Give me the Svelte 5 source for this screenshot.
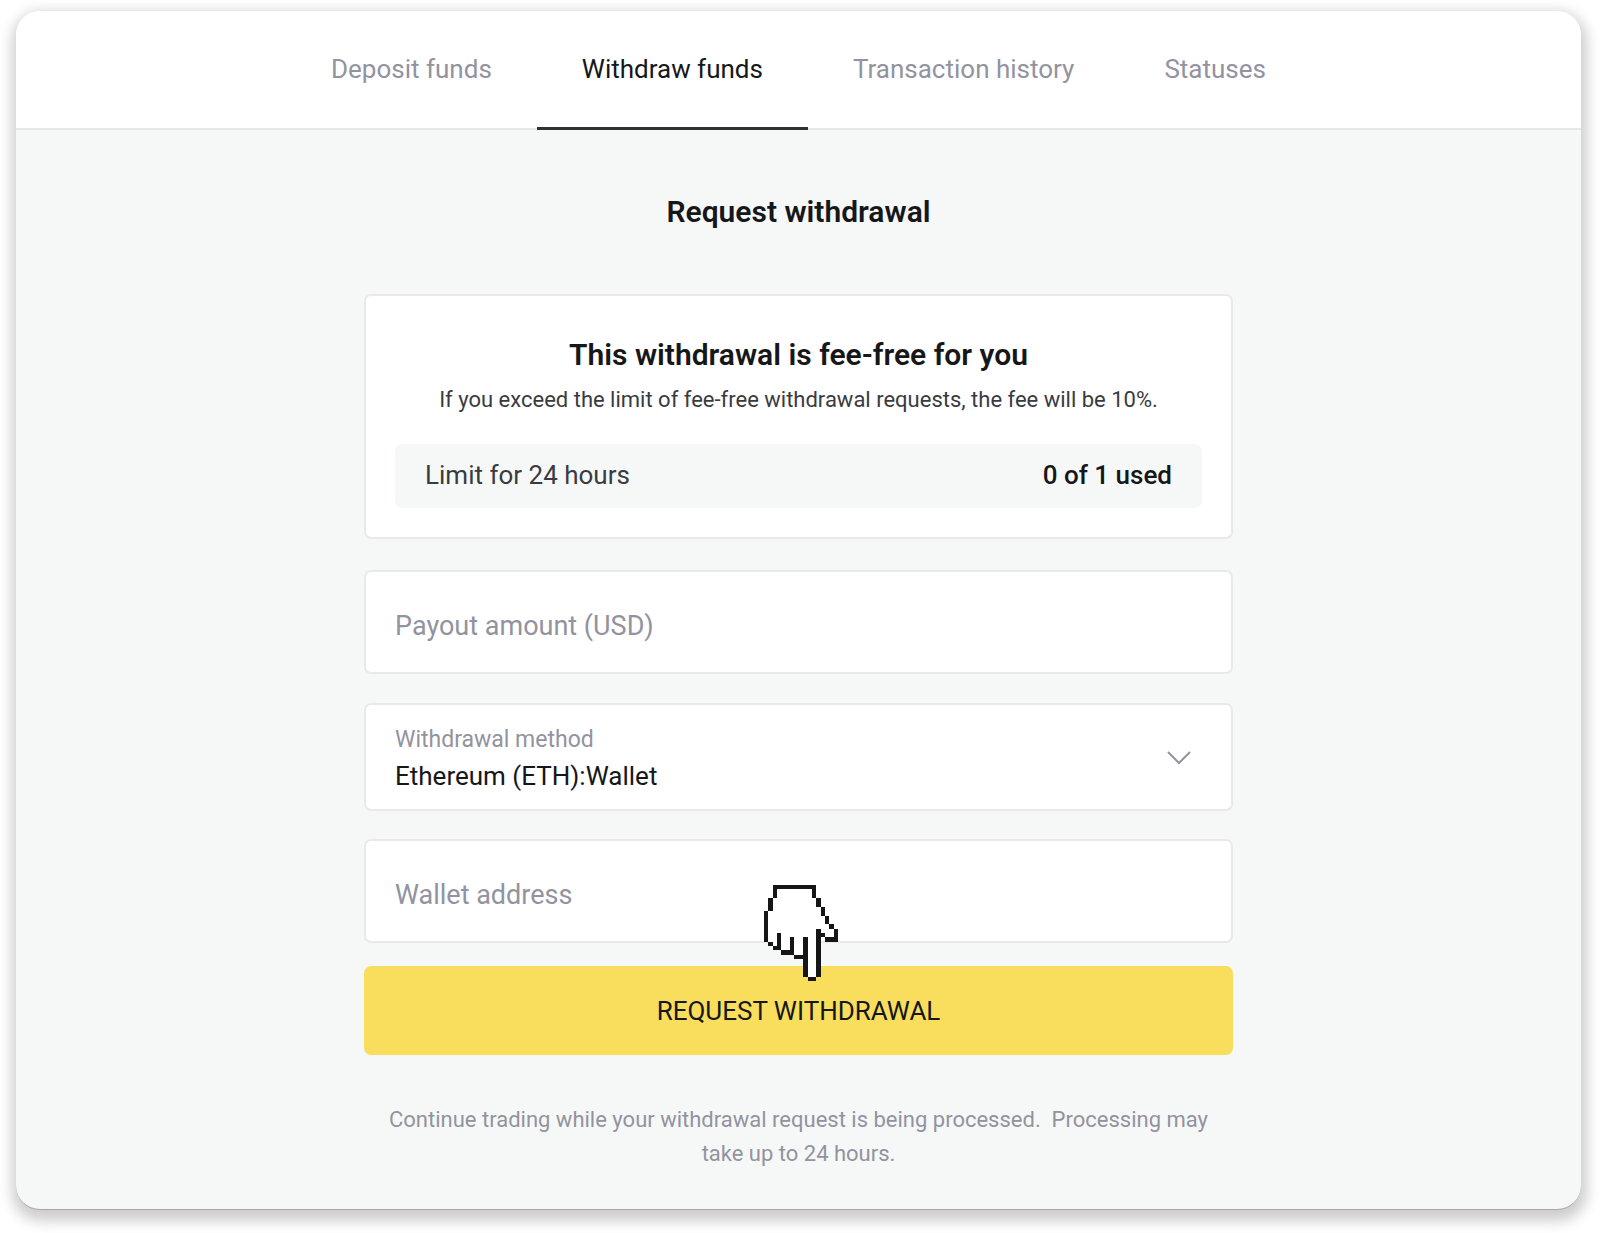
<script>
	let tabs = ["Deposit funds", "Withdraw funds", "Transaction history", "Statuses"];
	let active = "Withdraw funds";

	let methods = ["Ethereum (ETH):Wallet"];
	let method = methods[0];
	let amount = "";
	let address = "";

	let used = 0;
	let limit = 1;
</script>

<main>
	<nav>
		{#each tabs as tab}
			<a href="#{tab.toLowerCase().replace(' ', '-')}" class:active={tab === active} on:click|preventDefault={() => active = tab}>{tab}</a>
		{/each}
	</nav>

	<form on:submit|preventDefault>
		<h1>Request withdrawal</h1>

		<section class="box">
			<h2>This withdrawal is fee-free for you</h2>
			<p>If you exceed the limit of fee-free withdrawal requests, the fee will be 10%.</p>
			<div class="limit">
				<span>Limit for 24 hours</span>
				<strong>{used} of {limit} used</strong>
			</div>
		</section>

		<input class="box" type="text" aria-label="Payout amount (USD)" placeholder="Payout amount (USD)" bind:value={amount}>

		<div class="box method">
			<label for="method">Withdrawal method</label>
			<select id="method" bind:value={method}>
				{#each methods as m}
					<option value={m}>{m}</option>
				{/each}
			</select>
			<svg class="chevron" viewBox="0 0 24 14" aria-hidden="true">
				<path d="M1 1L12 12L23 1" />
			</svg>
		</div>

		<input class="box" type="text" aria-label="Wallet address" placeholder="Wallet address" bind:value={address}>

		<div class="submit">
			<button type="submit">REQUEST WITHDRAWAL</button>
			<!-- pixel hand, one unit per pixel -->
			<svg class="hand" viewBox="0 0 17 22" shape-rendering="crispEdges" aria-hidden="true">
				<path fill="#fff" d="M2 0H12V3H13V5H14V7H15V9H16V10H17V13H14V12H13V21H12V22H10V21H9V17H7V16H4V15H2V14H1V13H0V6H1V3H2Z" />
				<path fill="#161616" d="M2 0h10v1h-10z M2 1h1v2h-1z M11 1h1v2h-1z M1 3h1v3h-1z M0 6h1v7h-1z M1 13h1v1h-1z M2 14h1v1h-1z M3 11h1v4h-1z M4 15h3v1h-3z M6 12h1v3h-1z M7 16h2v1h-2z M9 12h1v9h-1z M10 21h2v1h-2z M12 10h1v11h-1z M13 11h1v1h-1z M14 12h3v1h-3z M16 10h1v2h-1z M15 9h1v1h-1z M14 7h1v2h-1z M13 5h1v2h-1z M12 3h1v2h-1z" />
			</svg>
		</div>

		<p class="note">Continue trading while your withdrawal request is being processed.&nbsp; Processing may take up to 24 hours.</p>
	</form>
</main>

<style>
	:global(body) {
		background: #fff;
		font-family: Roboto, "Liberation Sans", sans-serif;
		color: #161719;
	}

	main {
		margin: 11px 19px 24px 16px;
		background: #f6f8f8;
		border-radius: 24px;
		border-bottom: 1px solid #a6a8a8;
		box-shadow: 1px 6px 14px 5px rgba(0, 0, 0, 0.2);
		overflow: hidden;
	}

	nav {
		display: flex;
		justify-content: center;
		background: #fff;
		border-bottom: 2px solid #e4e8e7;
	}

	nav a {
		padding: 42px 45px 42px;
		margin-bottom: -2px;
		border-bottom: 3px solid transparent;
		font-size: 26px;
		line-height: 32px;
		color: #92939f;
		text-decoration: none;
		white-space: nowrap;
	}

	nav a.active {
		color: #161719;
		border-color: #2d3335;
	}

	form {
		box-sizing: border-box;
		max-width: 869px;
		margin: 0 auto;
		padding: 64px 0 38px;
		text-align: center;
	}

	h1, h2 {
		margin: 0;
		font-size: 30px;
		line-height: 36px;
		font-weight: 600;
	}

	h1 {
		margin-bottom: 64px;
	}

	p {
		margin: 0;
		font-size: 22px;
		line-height: 34px;
	}

	.box {
		display: block;
		box-sizing: border-box;
		width: 100%;
		background: #fff;
		border: 2px solid #e8eaea;
		border-radius: 7px;
	}

	section.box {
		padding: 41px 29px 29px;
		margin-bottom: 31px;
	}

	section p {
		margin: 10px 0 27px;
		color: #3a3b40;
	}

	.limit {
		display: flex;
		justify-content: space-between;
		align-items: center;
		padding: 15px 30px 17px;
		background: #f6f8f8;
		border-radius: 7px;
		font-size: 26px;
		line-height: 32px;
		color: #3a3b40;
	}

	.limit strong {
		font-weight: 500;
		color: #161719;
	}

	input {
		height: 104px;
		padding: 7px 29px 0;
		font: 27px/32px Roboto, "Liberation Sans", sans-serif;
		color: #161719;
	}

	input::placeholder {
		color: #92939f;
		opacity: 1;
	}

	.method {
		position: relative;
		display: flex;
		flex-direction: column;
		gap: 4px;
		margin: 29px 0 28px;
		padding: 19px 29px 17px;
		text-align: left;
	}

	.method label {
		font-size: 23px;
		line-height: 32px;
		color: #92939f;
	}

	select {
		appearance: none;
		width: 100%;
		height: 32px;
		padding: 0;
		border: 0;
		background: none;
		font: 26px/32px Roboto, "Liberation Sans", sans-serif;
		color: #161719;
	}

	.chevron {
		position: absolute;
		right: 40px;
		top: 46px;
		width: 24px;
		height: 14px;
		fill: none;
		stroke: #92939f;
		stroke-width: 2;
		pointer-events: none;
	}

	.submit {
		position: relative;
		margin-top: 23px;
	}

	button {
		display: block;
		width: 100%;
		height: 89px;
		padding: 0;
		border: 0;
		border-radius: 7px;
		background: #f9de5d;
		font: 26px/32px Roboto, "Liberation Sans", sans-serif;
		color: #161719;
		cursor: pointer;
	}

	.hand {
		position: absolute;
		left: calc(50% - 35px);
		bottom: 74px;
		width: 74px;
		height: 96px;
		pointer-events: none;
	}

	.note {
		margin-top: 48px;
		padding: 0 10px;
		color: #92939f;
	}
</style>
